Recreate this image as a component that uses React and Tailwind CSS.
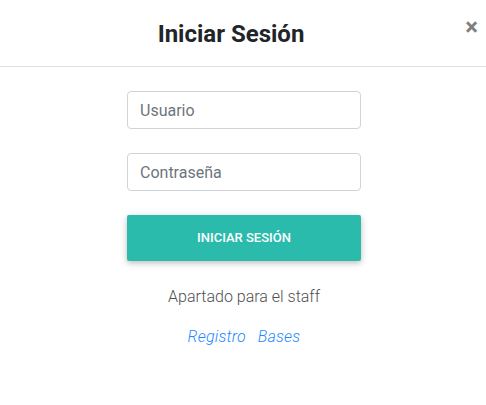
import React, { useState } from 'react';

const App = () => {
    const [user, setUser] = useState("");
    const [pass, setPass] = useState("");

    return (
        <div className="w-[486px] h-[405px] bg-white font-['Roboto',sans-serif] text-[#212529]">
            {/* header */}
            <div className="flex items-center h-[67px] pl-4 pr-[8px] border-b border-[#dee2e6]">
                <h4 className="flex-1 text-center text-[24px] font-bold leading-none pt-[1px]">Iniciar Sesión</h4>
                <button type="button" className="w-8 flex justify-end text-[24px] font-bold leading-none text-black opacity-50 -mt-[13px]">
                    ×
                </button>
            </div>

            {/* body */}
            <div className="pl-[2px]">
                <form onSubmit={(e) => e.preventDefault()} className="w-[234px] mx-auto pt-6 flex flex-col">
                    <input
                        type="text"
                        className="h-[38px] w-full border border-[#ced4da] rounded px-3 text-base text-[#495057] placeholder-[#6c757d] focus:outline-none"
                        placeholder="Usuario"
                        value={user}
                        onChange={(e) => setUser(e.target.value)}
                    />
                    <input
                        type="password"
                        className="mt-6 h-[38px] w-full border border-[#ced4da] rounded px-3 text-base text-[#495057] placeholder-[#6c757d] focus:outline-none"
                        placeholder="Contraseña"
                        value={pass}
                        onChange={(e) => setPass(e.target.value)}
                    />
                    <button
                        type="submit"
                        className="mt-6 h-[46px] w-full rounded-[2px] bg-[#2bbbad] text-white text-[13px] font-medium uppercase shadow-[0_2px_5px_0_rgba(0,0,0,0.16),0_2px_10px_0_rgba(0,0,0,0.12)]"
                    >
                        Iniciar Sesión
                    </button>
                </form>

                <p className="mt-6 text-center text-base leading-6 font-light text-[#4f4f4f]">Apartado para el staff</p>
                <div className="mt-4 flex justify-center gap-[12px] text-base leading-6 italic font-light tracking-[0.2px] text-[#1e88ff]">
                    <a href="#">Registro</a>
                    <a href="#">Bases</a>
                </div>
            </div>
        </div>
    );
};

export default App;
